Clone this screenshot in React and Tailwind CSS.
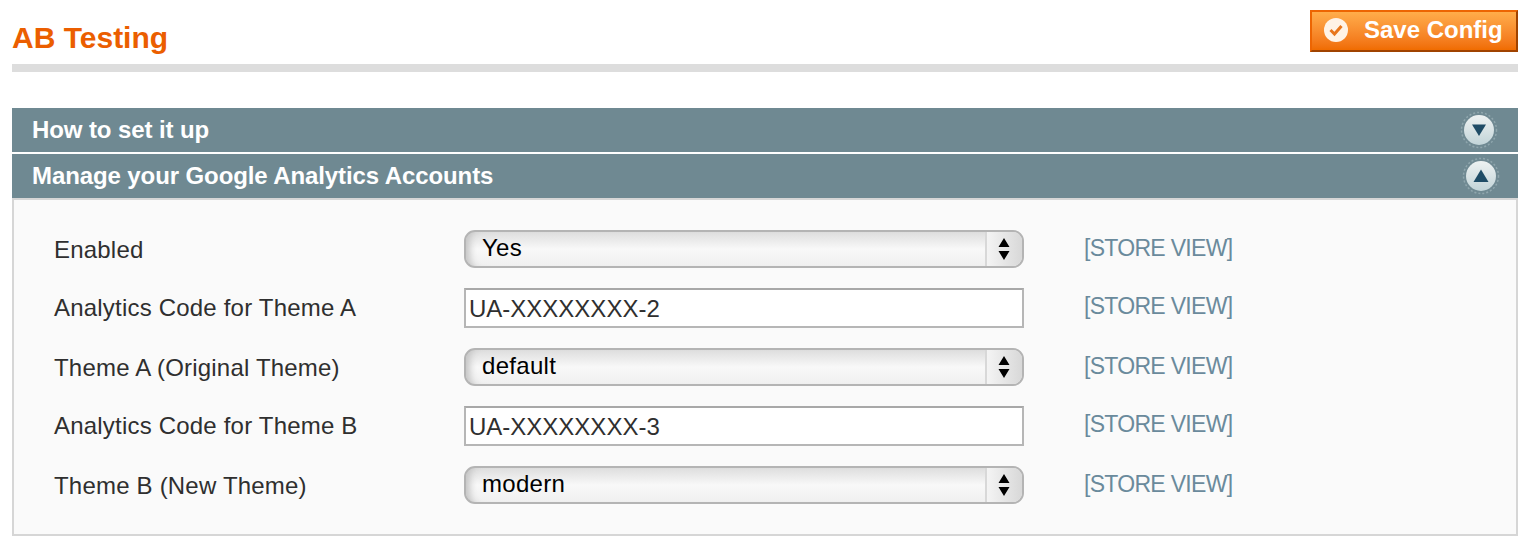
const ROWS = [
  { label: 'Enabled', type: 'select', value: 'Yes' },
  { label: 'Analytics Code for Theme A', type: 'input', value: 'UA-XXXXXXXX-2' },
  { label: 'Theme A (Original Theme)', type: 'select', value: 'default' },
  { label: 'Analytics Code for Theme B', type: 'input', value: 'UA-XXXXXXXX-3' },
  { label: 'Theme B (New Theme)', type: 'select', value: 'modern' },
];

function SelectBox({ value }) {
  return (
    <div className="flex h-[38px] w-[560px] overflow-hidden rounded-[11px] border-2 border-[#b4b4b4] bg-gradient-to-b from-[#dedede] via-[#f8f8f8] to-[#f0f0f0] shadow-[inset_10px_0_7px_-6px_#c4c4c4] text-[24px] leading-[32px] tracking-[0.3px] text-black">
      <span className="flex-1 pl-[16px]">{value}</span>
      <span className="flex w-[37px] items-center justify-center border-l-2 border-[#d8d8d8] bg-gradient-to-r from-[#f4f4f4] to-[#d8d8d8] pr-[2px]">
        <svg width="12" height="22" viewBox="0 0 12 22">
          <path d="M6 0 L11.5 9 H0.5 Z M0.5 13 H11.5 L6 22 Z" fill="#000" />
        </svg>
      </span>
    </div>
  );
}

function InputBox({ value }) {
  return (
    <div className="h-[40px] w-[560px] border-2 border-[#b6b6b6] border-t-[#a8a8a8] bg-white pl-[3px] text-[24px] leading-[38px] text-[#2f2f2f]">
      {value}
    </div>
  );
}

function RoundArrow({ up }) {
  const id = up ? 'knobUp' : 'knobDown';
  return (
    <svg width="38" height="38" viewBox="0 0 38 38">
      <circle cx="19" cy="19" r="17.5" fill="none" stroke="#8fa6ad" strokeWidth="1.5" strokeDasharray="2 2" />
      <defs>
        <linearGradient id={id} x1="0" y1="0" x2="0" y2="1">
          <stop offset="0" stopColor="#eef2f2" />
          <stop offset="1" stopColor="#c2d4d8" />
        </linearGradient>
      </defs>
      <circle cx="19" cy="19" r="15" fill={`url(#${id})`} />
      <path d={up ? 'M19 12.5 L26.5 25 H11.5 Z' : 'M12 13.5 H26 L19 25 Z'} fill="#1f4c66" />
    </svg>
  );
}

function SectionBar({ title, up }) {
  return (
    <div className={`flex h-[44px] items-center justify-between bg-[#6f8992] pl-[20px] text-[24px] font-bold text-white ${up ? 'pr-[18px]' : 'pr-[20px]'}`}>
      <span className="tracking-[-0.1px]">{title}</span>
      <RoundArrow up={up} />
    </div>
  );
}

export default function App() {
  return (
    <div className="h-[552px] bg-white px-[12px] pt-[10px] font-['Liberation_Sans',Arial,sans-serif]">
      <div className="flex h-[54px] items-start justify-between">
        <h1 className="pt-[10px] text-[30px] font-bold leading-[36px] text-[#eb5e00]">AB Testing</h1>
        <button className="flex h-[42px] w-[208px] items-center border-2 border-[#ed6502] border-r-[#a04300] border-b-[#a04300] bg-gradient-to-b from-[#ffad4a] to-[#f06c00] pb-[2px] pl-[11px] text-[24px] font-bold text-white">
          <svg width="26" height="26" viewBox="0 0 26 26">
            <circle cx="13" cy="13" r="12" fill="#fff3e6" />
            <path d="M7.5 13 L11.5 17 L18.5 9" fill="none" stroke="#e8761c" strokeWidth="3" />
          </svg>
          <span className="ml-[15px]">Save Config</span>
        </button>
      </div>
      <div className="h-[8px] bg-[#dddddd]" />

      <div className="mt-[36px]">
        <SectionBar title="How to set it up" />
        <div className="h-[2px] bg-white" />
        <SectionBar title="Manage your Google Analytics Accounts" up />
        <div className="flex h-[338px] flex-col gap-[20px] border-2 border-[#d6d6d6] bg-[#fafafa] pt-[30px] pl-[40px]">
          {ROWS.map((row) => (
            <div key={row.label} className="flex items-center">
              <label className={`w-[410px] text-[24px] leading-[32px] tracking-[0.2px] text-[#2f2f2f] ${row.type === 'select' ? 'pt-[2px]' : ''}`}>{row.label}</label>
              {row.type === 'select' ? <SelectBox value={row.value} /> : <InputBox value={row.value} />}
              <span className={`ml-[60px] text-[23px] tracking-[-0.7px] text-[#6a8a9c] ${row.type === 'select' ? 'pb-[2px]' : 'pb-[4px]'}`}>[STORE VIEW]</span>
            </div>
          ))}
        </div>
      </div>
    </div>
  );
}
